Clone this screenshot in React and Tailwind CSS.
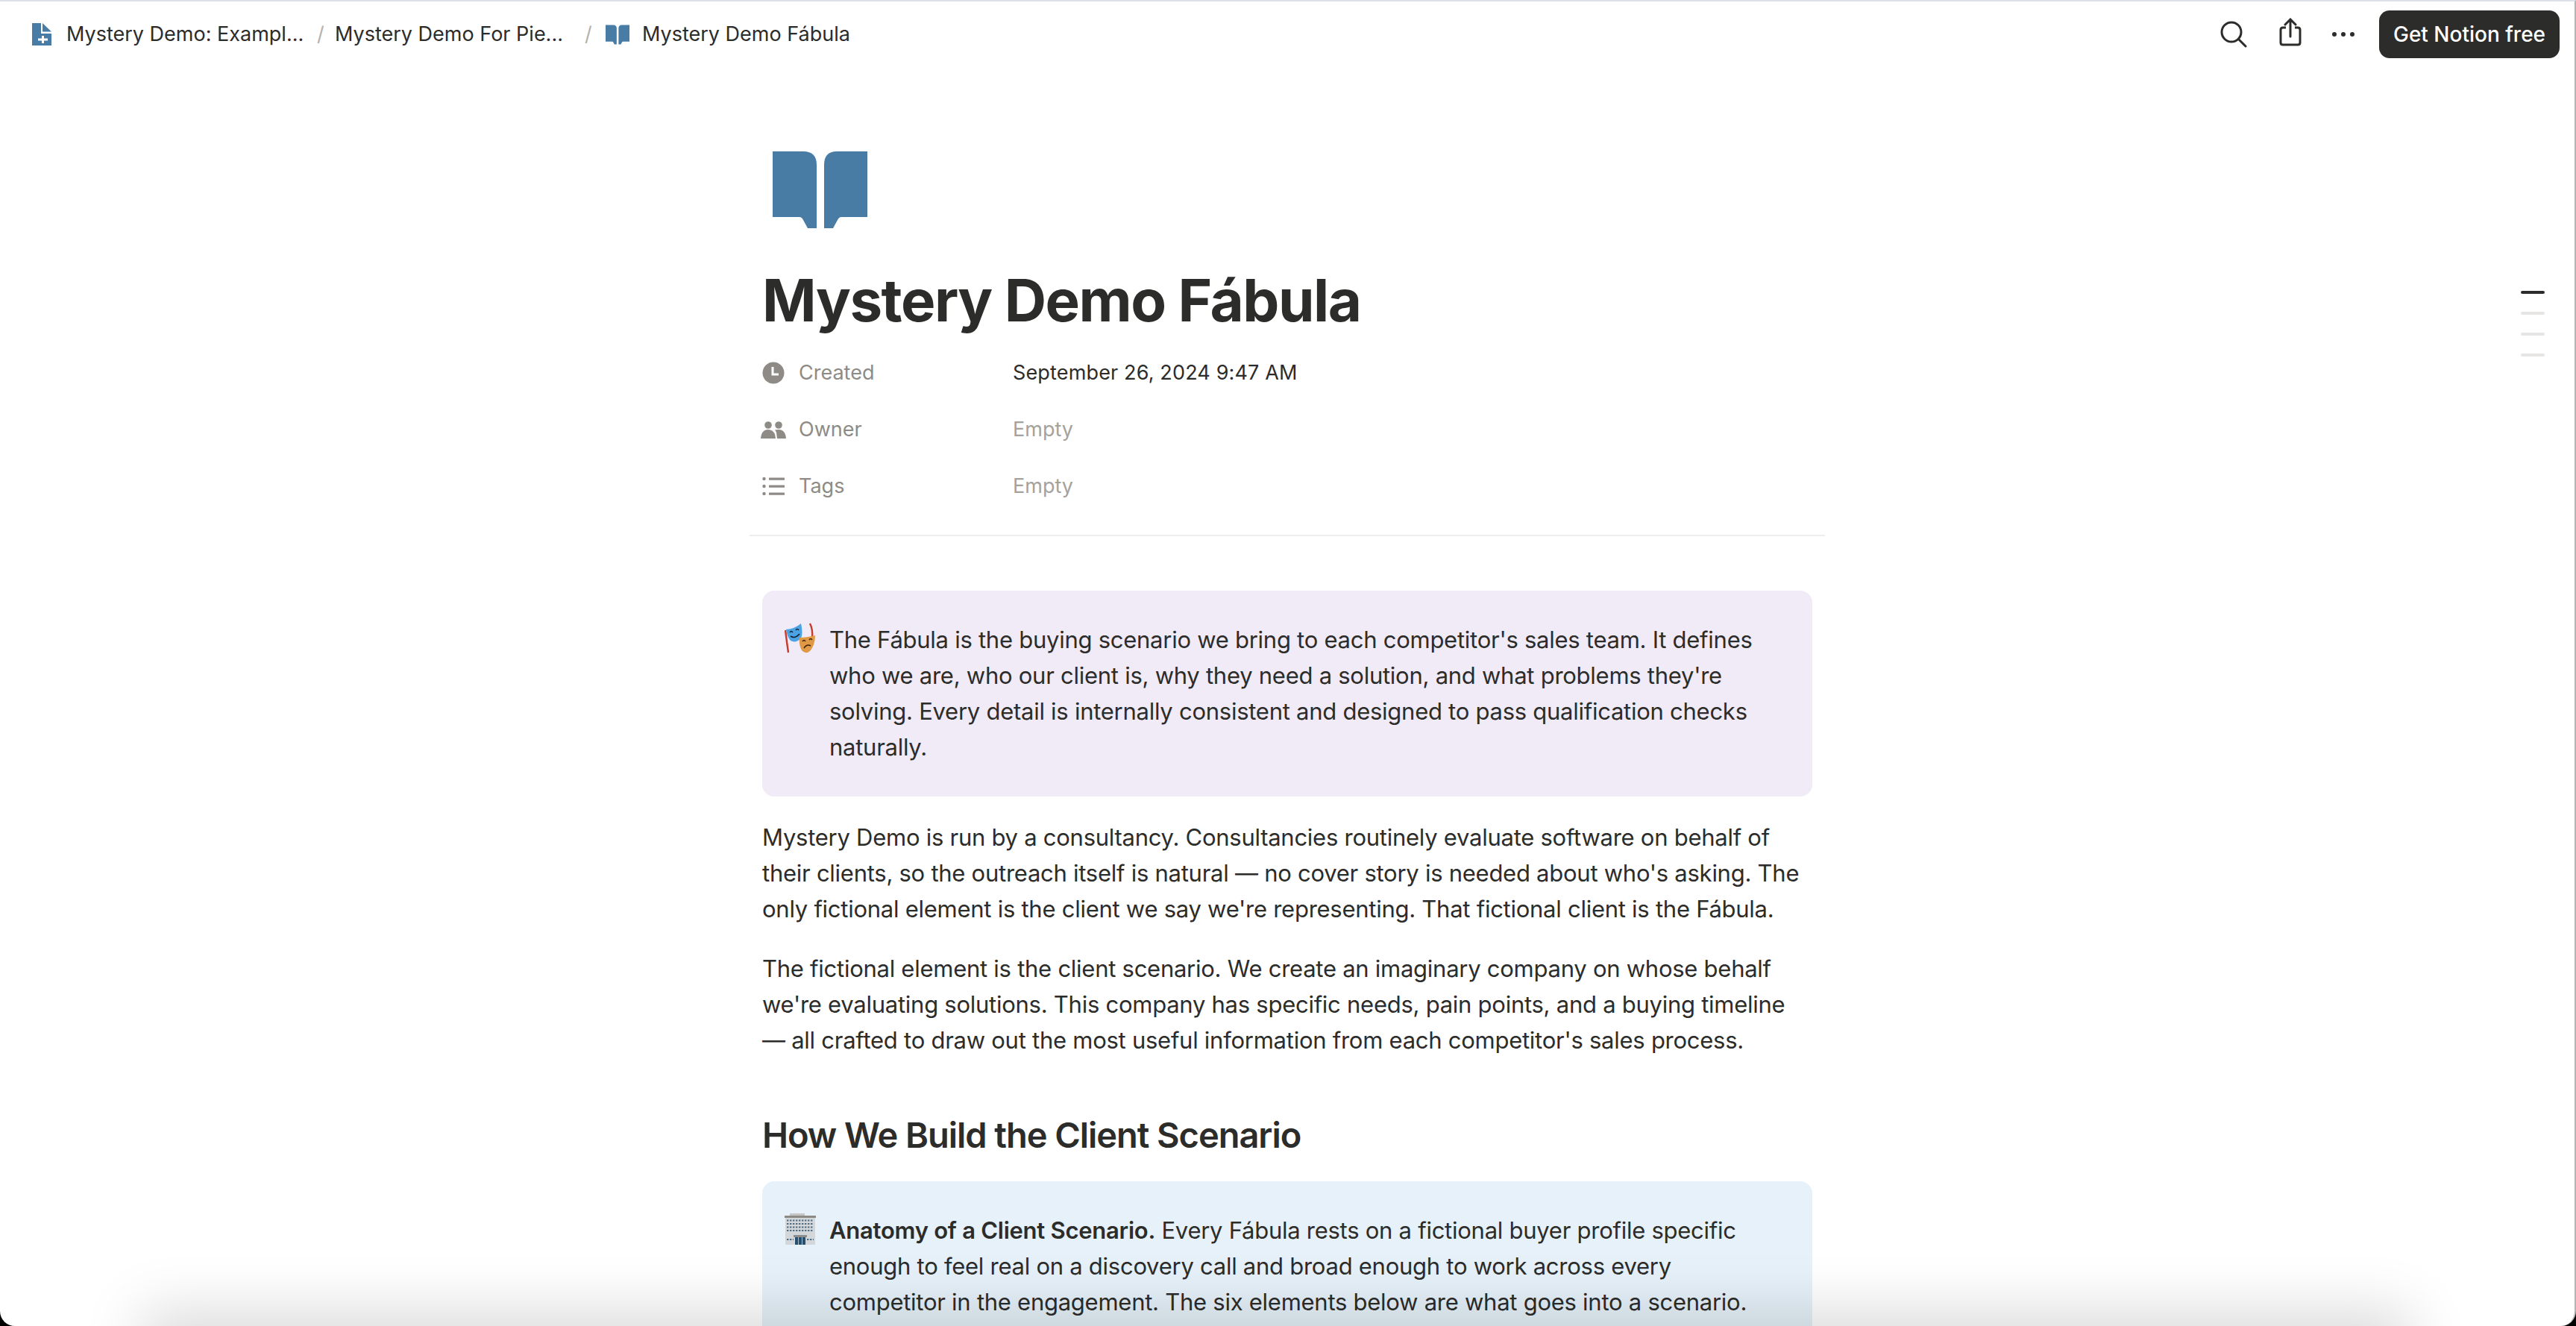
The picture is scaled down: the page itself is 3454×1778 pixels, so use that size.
const Doc = () => (
  <svg width="26" height="30" viewBox="0 0 26 30" className="shrink-0">
    <path d="M0 0H12V14H26V30H0Z" fill="#487ca5" />
    <path d="M14 0L26 11.5H14Z" fill="#487ca5" />
    <path d="M14.5 17V27M8 22H21" stroke="#fff" strokeWidth="3" />
  </svg>
);

const Book = ({ w, h }) => (
  <svg width={w} height={h} viewBox="0 0 127 103" className="shrink-0">
    <path d="M0 0H41Q59 0 59 18V103H47L41 92Q39 88 36 88H0Z" fill="#487ca5" />
    <path d="M127 0H86Q69 0 69 18V103H81L87 92Q89 88 92 88H127Z" fill="#487ca5" />
  </svg>
);

const Search = () => (
  <svg width="36" height="36" viewBox="0 0 36 36" fill="none" stroke="#2c2c2b" strokeWidth="3" className="shrink-0">
    <circle cx="15" cy="15" r="13" />
    <path d="M24.5 24.5L34 34" strokeLinecap="round" />
  </svg>
);

const Share = () => (
  <svg width="30" height="38" viewBox="0 0 30 38" fill="none" stroke="#2c2c2b" strokeWidth="3" className="shrink-0">
    <path d="M9 13H5Q2 13 2 16V33Q2 36 5 36H25Q28 36 28 33V16Q28 13 25 13H21" />
    <path d="M15 25V3M8 9L15 2L22 9" strokeLinecap="round" />
  </svg>
);

const Dots = () => (
  <svg width="32" height="8" viewBox="0 0 32 8" fill="#2c2c2b" className="shrink-0">
    <circle cx="4" cy="4" r="3" />
    <circle cx="16" cy="4" r="3" />
    <circle cx="28" cy="4" r="3" />
  </svg>
);

const Clock = () => (
  <svg width="30" height="30" viewBox="0 0 30 30" className="shrink-0">
    <circle cx="15" cy="15" r="14.5" fill="#8e8b86" />
    <path d="M14 7V17H22" fill="none" stroke="#fff" strokeWidth="3" />
  </svg>
);

const People = () => (
  <svg width="34" height="23" viewBox="0 0 34 23" fill="#8e8b86" className="shrink-0 -ml-[2px]">
    <circle cx="10" cy="5" r="4.8" />
    <circle cx="24" cy="5" r="4.8" />
    <path d="M0 23Q1 11 10 11Q16 11 19 17L20 23Z" />
    <path d="M22 23L21 15Q20 12 19 11.5Q21 11 24 11Q33 11 34 23Z" />
  </svg>
);

const ListIcon = () => (
  <svg width="30" height="24" viewBox="0 0 30 24" fill="#8e8b86" className="shrink-0">
    <circle cx="2.5" cy="2" r="2.2" />
    <circle cx="2.5" cy="12" r="2.2" />
    <circle cx="2.5" cy="22" r="2.2" />
    <rect x="9" y="0.5" width="21" height="3.2" rx="0.5" />
    <rect x="9" y="10.5" width="21" height="3.2" rx="0.5" />
    <rect x="9" y="20.5" width="21" height="3.2" rx="0.5" />
  </svg>
);

const Masks = () => (
  <svg width="42" height="42" viewBox="0 0 42 42" className="shrink-0">
    <path d="M1 10Q3 26 5 40" fill="none" stroke="#c83a2a" strokeWidth="2.4" />
    <path d="M34 1Q38 9 37 20" fill="none" stroke="#c83a2a" strokeWidth="2.4" />
    <path d="M2 9Q14 8 22 1Q25 14 22 21Q15 28 8 24Q3 18 2 9Z" fill="#4ba3e3" />
    <path d="M7 13Q9 10 11 13M15 10Q17 7 19 10" fill="none" stroke="#123" strokeWidth="1.4" />
    <path d="M8 18Q14 22 20 15" fill="none" stroke="#123" strokeWidth="1.6" />
    <path d="M20 20Q29 20 41 17Q41 30 34 38Q28 43 23 37Q19 30 20 20Z" fill="#e09a45" />
    <path d="M24 25Q26 22 28 25M33 23Q35 20 37 23" fill="none" stroke="#3d2208" strokeWidth="1.4" />
    <path d="M26 34Q30 28 35 31" fill="none" stroke="#3d2208" strokeWidth="1.6" />
  </svg>
);

const Building = () => (
  <svg width="42" height="42" viewBox="0 0 42 42" className="shrink-0">
    <rect x="7" y="0" width="20" height="4" fill="#c4c5c5" />
    <rect x="0" y="3" width="42" height="3" fill="#8d8a85" />
    <rect x="1" y="6" width="40" height="36" fill="#d3d7da" />
    <path d="M3 9.5H39M3 14H39M3 18.5H39M3 23H39M3 35H12M30 35H39" stroke="#4d6e88" strokeWidth="2" strokeDasharray="2.4 1.6" />
    <rect x="12" y="29" width="18" height="3" fill="#8d8d8d" />
    <rect x="14" y="32" width="14" height="10" fill="#27506f" />
    <path d="M18.5 32V42M23.5 32V42" stroke="#a9bcc9" strokeWidth="1" />
  </svg>
);

const Prop = ({ icon, label, children }) => (
  <div className="flex items-center h-[76px] text-[27px]">
    <div className="w-[49px] h-[30px] flex items-center">{icon}</div>
    <div className="w-[287px] text-[#8e8b86]">{label}</div>
    {children}
  </div>
);

const Callout = ({ bg, icon, children }) => (
  <div className={`flex rounded-[16px] pl-[30px] pr-[40px] pt-[42px] pb-[42px] ${bg}`}>
    <div className="w-[60px] shrink-0 pt-[1px]">{icon}</div>
    <div className="leading-[48px]">{children}</div>
  </div>
);

export default function App() {
  return (
    <div className="w-[3454px] h-[1778px] bg-black overflow-hidden font-['Inter',sans-serif]">
      <div className="relative w-full h-full bg-white rounded-b-[20px] overflow-hidden text-[#2c2c2b] border-t-2 border-t-[#dde0ea] border-r-2 border-r-[#b4b4b4]">
        <header className="flex items-center h-[88px] pl-[43px] pr-[20px] text-[27px]">
          <div className="flex items-center flex-1">
            <Doc />
            <span className="ml-[20px] w-[336px] whitespace-nowrap">Mystery Demo: Exampl...</span>
            <span className="text-[#b4b2ad] w-[24px]">/</span>
            <span className="w-[335px] whitespace-nowrap">Mystery Demo For Pie...</span>
            <span className="text-[#b4b2ad] w-[28px]">/</span>
            <Book w={32} h={27} />
            <span className="ml-[17px] whitespace-nowrap">Mystery Demo Fábula</span>
          </div>
          <div className="flex items-center">
            <Search />
            <div className="ml-[43px] -mt-[6px]"><Share /></div>
            <div className="ml-[40px]"><Dots /></div>
            <button className="ml-[32px] w-[242px] h-[64px] rounded-[14px] bg-[#2c2c2b] text-white text-[28px] font-medium">Get Notion free</button>
          </div>
        </header>

        <main className="flex justify-center">
          <div className="w-[1408px]">
            <div className="pt-[113px] pl-[14px]"><Book w={127} h={103} /></div>
            <h1 className="mt-[45px] text-[78px] leading-[104px] font-bold tracking-[-1.5px]">Mystery Demo Fábula</h1>
            <div className="mt-[7px]">
              <Prop icon={<Clock />} label="Created"><span className="tracking-[0.15px]">September 26, 2024 9:47 AM</span></Prop>
              <Prop icon={<People />} label="Owner"><span className="text-[#a5a29c]">Empty</span></Prop>
              <Prop icon={<ListIcon />} label="Tags"><span className="text-[#a5a29c]">Empty</span></Prop>
            </div>
            <div className="-mx-[17px] mt-[27px] h-[2px] bg-[#efeeec]" />

            <div className="mt-[73px] text-[31px] tracking-[-0.26px]">
              <Callout bg="bg-[#f1ebf7]" icon={<Masks />}>
                The Fábula is the buying scenario we bring to each competitor's sales team. It defines who we are, who our client is, why they need a solution, and what problems they're solving. Every detail is internally consistent and designed to pass qualification checks naturally.
              </Callout>
              <p className="mt-[31px] leading-[48px]">
                Mystery Demo is run by a consultancy. Consultancies routinely evaluate software on behalf of their clients, so the outreach itself is natural — no cover story is needed about who's asking. The only fictional element is the client we say we're representing. That fictional client is the Fábula.
              </p>
              <p className="mt-[32px] leading-[48px]">
                The fictional element is the client scenario. We create an imaginary company on whose behalf we're evaluating solutions. This company has specific needs, pain points, and a buying timeline —{"\u00a0"}all crafted to draw out the most useful information from each competitor's sales process.
              </p>
              <h2 className="mt-[71px] text-[47px] leading-[64px] font-semibold tracking-[-1.05px]">How We Build the Client Scenario</h2>
              <div className="mt-[30px]">
                <Callout bg="bg-[#e6f1f9]" icon={<Building />}>
                  <b className="font-semibold">Anatomy of a Client Scenario.</b> Every Fábula rests on a fictional buyer profile specific enough to feel real on a discovery call and broad enough to work across every competitor in the engagement. The six elements below are what goes into a scenario.
                </Callout>
              </div>
            </div>
          </div>
        </main>

        <div className="absolute top-[388px] right-[40px] flex flex-col gap-[24px] w-[32px]">
          <div className="h-[4px] rounded-full bg-[#2c2c2b]" />
          <div className="h-[4px] rounded-full bg-[#e6e5e3]" />
          <div className="h-[4px] rounded-full bg-[#e6e5e3]" />
          <div className="h-[4px] rounded-full bg-[#e6e5e3]" />
        </div>

        <div className="absolute left-[210px] right-[240px] -bottom-[60px] h-[60px] shadow-[0_0_80px_20px_rgba(0,0,0,0.15)]" />
      </div>
    </div>
  );
}
